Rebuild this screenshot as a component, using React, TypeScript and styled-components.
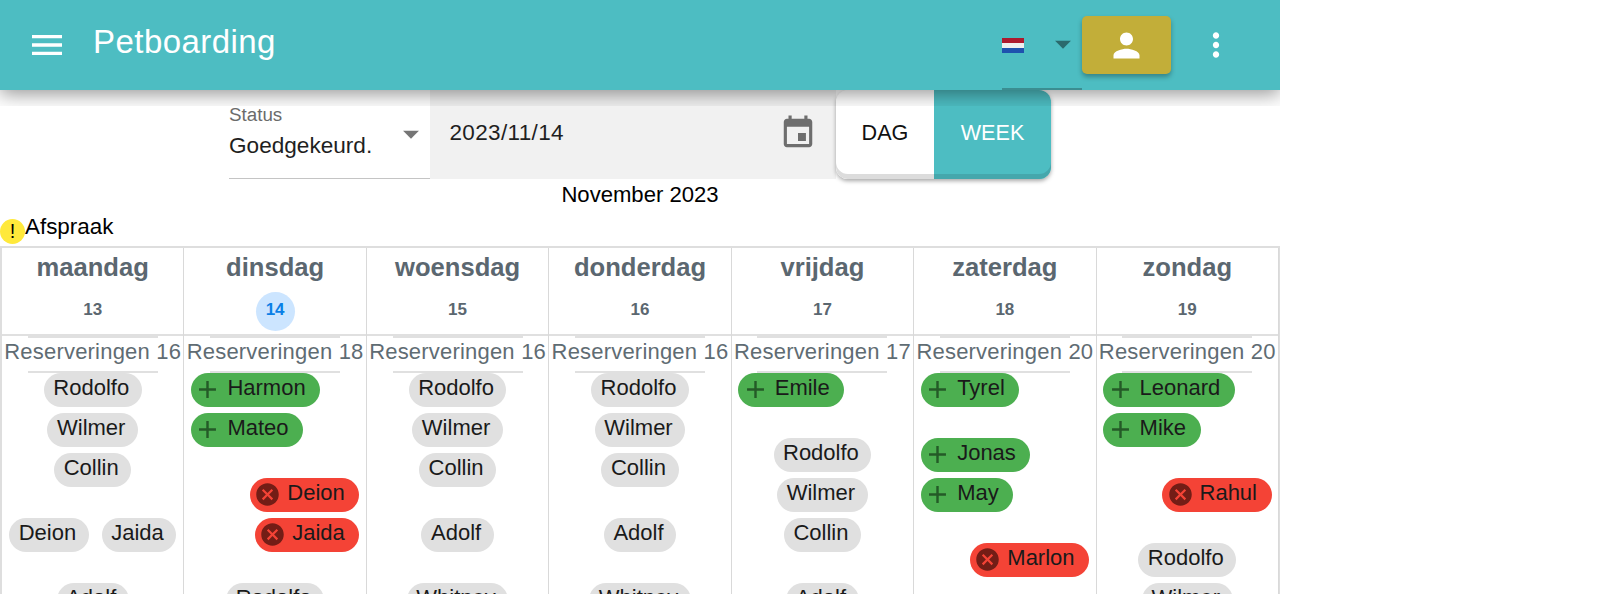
import styled, { createGlobalStyle } from "styled-components";

const GlobalStyle = createGlobalStyle`
  html, body {
    margin: 0;
    height: 594px;
    overflow: hidden;
    background: #fff;
    font-family: "Liberation Sans", Arial, sans-serif;
  }
`;

const Page = styled.div`
  width: 1280px;
`;

const Header = styled.header`
  position: relative;
  z-index: 2;
  height: 90px;
  display: flex;
  align-items: center;
  background: #4dbdc2;
  box-shadow: 0 4px 18px rgba(0, 0, 0, 0.42);
  clip-path: inset(0 0 -16px 0);
`;

const MenuButton = styled.div`
  display: flex;
  margin-left: 27px;
  color: #fff;
`;

const Title = styled.div`
  margin-left: 26px;
  margin-bottom: 6px;
  flex: 1;
  font-size: 33px;
  letter-spacing: 0.45px;
  color: #fff;
`;

const LanguageSelect = styled.div`
  width: 80px;
  height: 90px;
  box-sizing: border-box;
  border-bottom: 2px solid #3b8d91;
  display: flex;
  align-items: center;
  justify-content: space-between;
`;

const Flag = styled.svg`
  margin-top: 2px;
`;

const ArrowBox = styled.div`
  display: flex;
  color: #2b6a6d;
`;

const ProfileButton = styled.div`
  width: 89px;
  height: 58px;
  display: flex;
  align-items: center;
  justify-content: center;
  background: #c2ae39;
  border-radius: 5px;
  color: #fff;
  box-shadow: 0 3px 5px rgba(0, 0, 0, 0.3);
`;

const MoreButton = styled.div`
  display: flex;
  margin: 0 45px 0 26px;
  color: #fff;
`;

const Toolbar = styled.div`
  display: flex;
  justify-content: center;
  height: 89px;
`;

const StatusField = styled.div`
  width: 201px;
  box-sizing: border-box;
  padding-top: 15px;
  border-bottom: 1px solid #c4c4c4;
  display: flex;
  justify-content: space-between;
`;

const StatusLabel = styled.div`
  font-size: 18.8px;
  line-height: 20px;
  color: #6b6b6b;
`;

const StatusValue = styled.div`
  margin-top: 6px;
  font-size: 22.6px;
  line-height: 30px;
  color: #1f1f1f;
`;

const StatusArrow = styled.div`
  display: flex;
  margin-top: 10px;
  color: #757575;
`;

const DateField = styled.div`
  width: 406px;
  box-sizing: border-box;
  padding: 0 19px 0 19.5px;
  background: #f1f1f1;
  display: flex;
  align-items: flex-start;
  justify-content: space-between;
`;

const DateText = styled.div`
  margin-top: 29px;
  font-size: 22.5px;
  letter-spacing: 0.35px;
  line-height: 28px;
  color: #1f1f1f;
`;

const CalendarIcon = styled.div`
  display: flex;
  margin-top: 24px;
  color: #6e6e6e;
`;

const Toggle = styled.div`
  width: 215px;
  display: flex;
  border-radius: 12px;
  box-shadow: 0 2px 4px rgba(0, 0, 0, 0.35);
`;

const ToggleButton = styled.div<{ $active?: boolean }>`
  box-sizing: border-box;
  width: ${(p) => (p.$active ? "117px" : "98px")};
  padding-top: 29px;
  text-align: center;
  font-size: 21.6px;
  line-height: 28px;
  border-radius: ${(p) => (p.$active ? "0 12px 12px 0" : "12px 0 0 12px")};
  color: ${(p) => (p.$active ? "#fff" : "#111")};
  background: ${(p) => (p.$active ? "#4dbdc2" : "#fff")};
  box-shadow: inset 0 -5px 0 ${(p) => (p.$active ? "#45a7ac" : "#dcdcdc")};
`;

const MonthTitle = styled.div`
  height: 30px;
  padding-top: 1px;
  box-sizing: border-box;
  text-align: center;
  font-size: 22.1px;
  line-height: 29px;
  color: #000;
`;

const Legend = styled.div`
  height: 37px;
  box-sizing: border-box;
  padding-top: 3px;
  display: flex;
  align-items: flex-start;
  font-size: 22.4px;
  line-height: 30px;
  color: #000;
`;

const LegendDot = styled.div`
  width: 25px;
  height: 25px;
  margin-top: 7px;
  border-radius: 50%;
  background: #ffe93b;
  font-size: 20px;
  line-height: 25px;
  text-align: center;
`;

const WeekGrid = styled.div`
  display: grid;
  grid-template-columns: repeat(7, 1fr);
  border: 2px solid #dedede;
  border-right-width: 1px;
  border-bottom: 0;
`;

const DayColumn = styled.div`
  border-right: 1px solid #d9d9d9;
  min-width: 0;
`;

const DayHead = styled.div`
  height: 86px;
  border-bottom: 2px solid #e0e0e0;
  text-align: center;
  color: #5b6770;
  font-weight: bold;
`;

const DayName = styled.div`
  padding-top: 4px;
  font-size: 25.6px;
  line-height: 30px;
`;

const DayNumber = styled.div<{ $today?: boolean }>`
  width: 39px;
  height: 39px;
  margin: 10px auto 0;
  border-radius: 50%;
  font-size: 17px;
  line-height: 36px;
  background: ${(p) => (p.$today ? "#cce5ff" : "transparent")};
  color: ${(p) => (p.$today ? "#0a7fe6" : "#5b6770")};
`;

const CountLine = styled.div`
  width: 130px;
  height: 33px;
  margin: 0 auto;
  border-top: 2px solid #e0e0e0;
  border-bottom: 2px solid #e0e0e0;
  display: flex;
  justify-content: center;
`;

const CountText = styled.div`
  flex: none;
  font-size: 22px;
  letter-spacing: 0.2px;
  line-height: 28px;
  white-space: nowrap;
  color: #5f6c73;
`;

const ChipGroup = styled.div<{ $align: string }>`
  display: flex;
  flex-wrap: wrap;
  justify-content: ${(p) => p.$align};
  margin-bottom: 25px;
`;

const Chip = styled.div<{ $bg: string; $hasIcon: boolean }>`
  box-sizing: border-box;
  height: 33.5px;
  margin: 0 6.5px 6.5px;
  padding: 0 ${(p) => (p.$hasIcon ? "14.5px" : "12.5px")} 3.5px 9.5px;
  display: flex;
  align-items: center;
  border-radius: 17px;
  background: ${(p) => p.$bg};
  font-size: 22px;
  color: #1a1a1a;
  white-space: nowrap;
`;

const ChipIcon = styled.svg<{ $color: string; $gap: number; $lead: number }>`
  flex: none;
  margin: 0 ${(p) => p.$gap}px -3.5px ${(p) => p.$lead}px;
  fill: ${(p) => p.$color};
`;

const Ico = ({ d, size }: { d: string; size: number }) => (
  <svg width={size} height={size} viewBox="0 0 24 24" fill="currentColor">
    <path d={d} />
  </svg>
);

const MENU = "M3 18h18v-2H3v2zm0-5h18v-2H3v2zm0-7v2h18V6H3z";
const ARROW = "M7 10l5 5 5-5z";
const PERSON = "M12 12c2.21 0 4-1.79 4-4s-1.79-4-4-4-4 1.79-4 4 1.79 4 4 4zm0 2c-2.67 0-8 1.34-8 4v2h16v-2c0-2.66-5.33-4-8-4z";
const MORE = "M12 8c1.1 0 2-.9 2-2s-.9-2-2-2-2 .9-2 2 .9 2 2 2zm0 2c-1.1 0-2 .9-2 2s.9 2 2 2 2-.9 2-2-.9-2-2-2zm0 6c-1.1 0-2 .9-2 2s.9 2 2 2 2-.9 2-2-.9-2-2-2z";
const EVENT = "M17 12h-5v5h5v-5zM16 1v2H8V1H6v2H5c-1.11 0-1.99.9-1.99 2L3 19c0 1.1.89 2 2 2h14c1.1 0 2-.9 2-2V5c0-1.1-.9-2-2-2h-1V1h-2zm3 18H5V8h14v11z";
const ADD = "M19 13h-6v6h-2v-6H5v-2h6V5h2v6h6v2z";
const CANCEL = "M12 2C6.47 2 2 6.47 2 12s4.47 10 10 10 10-4.47 10-10S17.53 2 12 2zm5 13.59L15.59 17 12 13.41 8.41 17 7 15.59 10.59 12 7 8.41 8.41 7 12 10.59 15.59 7 17 8.41 13.41 12 17 15.59z";

type Kind = "new" | "cancel" | "plain";
type Group = { kind: Kind; names: string[] };
type Day = { name: string; num: number; count: number; today?: boolean; groups: Group[] };

const days: Day[] = [
  { name: "maandag", num: 13, count: 16, groups: [
    { kind: "plain", names: ["Rodolfo", "Wilmer", "Collin"] },
    { kind: "plain", names: ["Deion", "Jaida"] },
    { kind: "plain", names: ["Adolf"] },
  ] },
  { name: "dinsdag", num: 14, count: 18, today: true, groups: [
    { kind: "new", names: ["Harmon", "Mateo"] },
    { kind: "cancel", names: ["Deion", "Jaida"] },
    { kind: "plain", names: ["Rodolfo"] },
  ] },
  { name: "woensdag", num: 15, count: 16, groups: [
    { kind: "plain", names: ["Rodolfo", "Wilmer", "Collin"] },
    { kind: "plain", names: ["Adolf"] },
    { kind: "plain", names: ["Whitney"] },
  ] },
  { name: "donderdag", num: 16, count: 16, groups: [
    { kind: "plain", names: ["Rodolfo", "Wilmer", "Collin"] },
    { kind: "plain", names: ["Adolf"] },
    { kind: "plain", names: ["Whitney"] },
  ] },
  { name: "vrijdag", num: 17, count: 17, groups: [
    { kind: "new", names: ["Emile"] },
    { kind: "plain", names: ["Rodolfo", "Wilmer", "Collin"] },
    { kind: "plain", names: ["Adolf"] },
  ] },
  { name: "zaterdag", num: 18, count: 20, groups: [
    { kind: "new", names: ["Tyrel"] },
    { kind: "new", names: ["Jonas", "May"] },
    { kind: "cancel", names: ["Marlon"] },
  ] },
  { name: "zondag", num: 19, count: 20, groups: [
    { kind: "new", names: ["Leonard", "Mike"] },
    { kind: "cancel", names: ["Rahul"] },
    { kind: "plain", names: ["Rodolfo", "Wilmer"] },
  ] },
];

const chipColors: Record<Kind, string> = { new: "#4caf50", cancel: "#f44336", plain: "#e0e0e0" };
const alignFor: Record<Kind, string> = { new: "flex-start", cancel: "flex-end", plain: "center" };

const App = () => {
  return (
    <Page>
      <GlobalStyle />
      <Header>
        <MenuButton>
          <Ico d={MENU} size={40} />
        </MenuButton>
        <Title>Petboarding</Title>
        <LanguageSelect>
          <Flag width="22" height="15" viewBox="0 0 22 15">
            <rect width="22" height="5" fill="#ad1a2e" />
            <rect y="5" width="22" height="5" fill="#eeeeee" />
            <rect y="10" width="22" height="5" fill="#1e52ae" />
          </Flag>
          <ArrowBox>
            <Ico d={ARROW} size={38} />
          </ArrowBox>
        </LanguageSelect>
        <ProfileButton>
          <Ico d={PERSON} size={39} />
        </ProfileButton>
        <MoreButton>
          <Ico d={MORE} size={38} />
        </MoreButton>
      </Header>
      <Toolbar>
        <StatusField>
          <div>
            <StatusLabel>Status</StatusLabel>
            <StatusValue>Goedgekeurd.</StatusValue>
          </div>
          <StatusArrow>
            <Ico d={ARROW} size={38} />
          </StatusArrow>
        </StatusField>
        <DateField>
          <DateText>2023/11/14</DateText>
          <CalendarIcon>
            <Ico d={EVENT} size={38} />
          </CalendarIcon>
        </DateField>
        <Toggle>
          <ToggleButton>DAG</ToggleButton>
          <ToggleButton $active>WEEK</ToggleButton>
        </Toggle>
      </Toolbar>
      <MonthTitle>November 2023</MonthTitle>
      <Legend>
        <LegendDot>!</LegendDot>
        Afspraak
      </Legend>
      <WeekGrid>
        {days.map((day) => (
          <DayColumn key={day.name}>
            <DayHead>
              <DayName>{day.name}</DayName>
              <DayNumber $today={day.today}>{day.num}</DayNumber>
            </DayHead>
            <CountLine>
              <CountText>Reserveringen {day.count}</CountText>
            </CountLine>
            {day.groups.map((group, i) => (
              <ChipGroup key={i} $align={alignFor[group.kind]}>
                {group.names.map((n) => (
                  <Chip key={n} $bg={chipColors[group.kind]} $hasIcon={group.kind !== "plain"}>
                    {group.kind === "new" && (
                      <ChipIcon $color="#245a27" $gap={5} $lead={-7} width="29" height="29" viewBox="0 0 24 24">
                        <path d={ADD} />
                      </ChipIcon>
                    )}
                    {group.kind === "cancel" && (
                      <ChipIcon $color="#731d16" $gap={6} $lead={-5} width="27" height="27" viewBox="0 0 24 24">
                        <path d={CANCEL} />
                      </ChipIcon>
                    )}
                    {n}
                  </Chip>
                ))}
              </ChipGroup>
            ))}
          </DayColumn>
        ))}
      </WeekGrid>
    </Page>
  );
};

export default App;
